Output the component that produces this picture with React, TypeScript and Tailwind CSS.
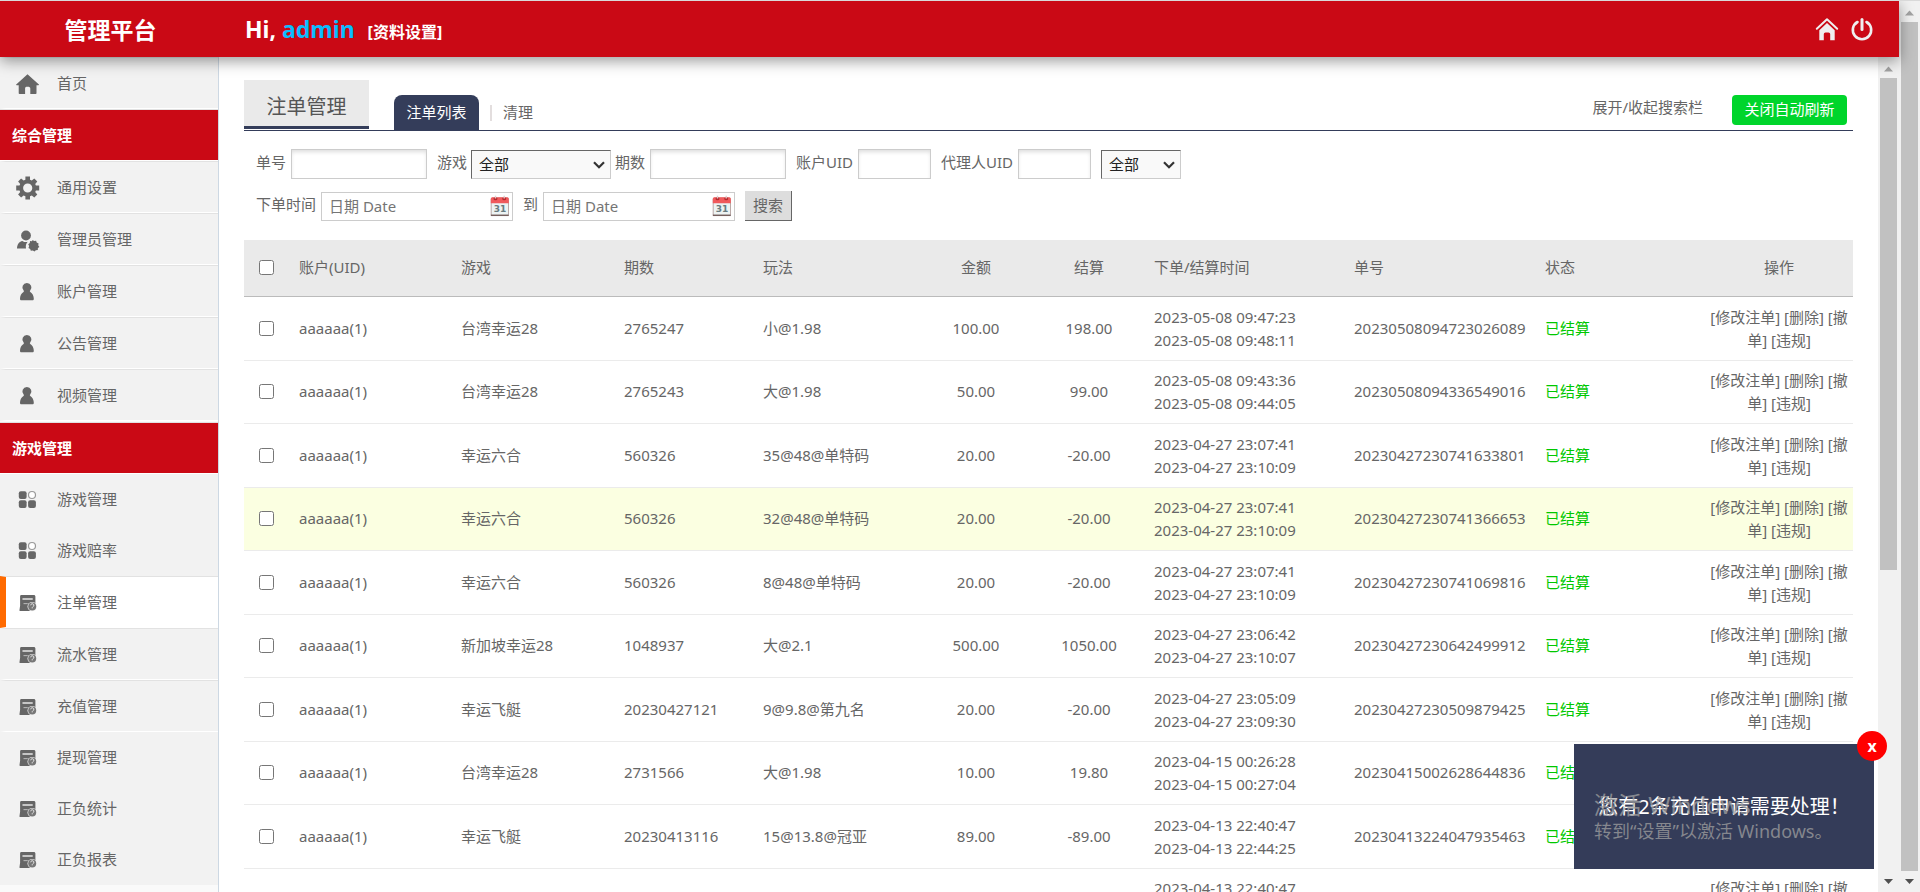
import type { ReactNode } from "react";

type IconName = "home" | "gear" | "admin" | "user" | "grid" | "ledger";

type NavItem = { label: string; icon: IconName; active?: boolean; plain?: boolean };
type NavGroup = { title?: string; items: NavItem[] };

const NAV: NavGroup[] = [
  { items: [{ label: "首页", icon: "home" }] },
  {
    title: "综合管理",
    items: [
      { label: "通用设置", icon: "gear" },
      { label: "管理员管理", icon: "admin" },
      { label: "账户管理", icon: "user" },
      { label: "公告管理", icon: "user" },
      { label: "视频管理", icon: "user" },
    ],
  },
  {
    title: "游戏管理",
    items: [
      { label: "游戏管理", icon: "grid", plain: true },
      { label: "游戏赔率", icon: "grid", plain: true },
      { label: "注单管理", icon: "ledger", active: true },
      { label: "流水管理", icon: "ledger" },
      { label: "充值管理", icon: "ledger" },
      { label: "提现管理", icon: "ledger", plain: true },
      { label: "正负统计", icon: "ledger", plain: true },
      { label: "正负报表", icon: "ledger", plain: true },
    ],
  },
];

type Bet = {
  game: string;
  issue: string;
  play: string;
  amount: string;
  result: string;
  placed: string;
  settled: string;
  order: string;
  highlight?: boolean;
};

const BETS: Bet[] = [
  { game: "台湾幸运28", issue: "2765247", play: "小@1.98", amount: "100.00", result: "198.00", placed: "2023-05-08 09:47:23", settled: "2023-05-08 09:48:11", order: "20230508094723026089" },
  { game: "台湾幸运28", issue: "2765243", play: "大@1.98", amount: "50.00", result: "99.00", placed: "2023-05-08 09:43:36", settled: "2023-05-08 09:44:05", order: "20230508094336549016" },
  { game: "幸运六合", issue: "560326", play: "35@48@单特码", amount: "20.00", result: "-20.00", placed: "2023-04-27 23:07:41", settled: "2023-04-27 23:10:09", order: "20230427230741633801" },
  { game: "幸运六合", issue: "560326", play: "32@48@单特码", amount: "20.00", result: "-20.00", placed: "2023-04-27 23:07:41", settled: "2023-04-27 23:10:09", order: "20230427230741366653", highlight: true },
  { game: "幸运六合", issue: "560326", play: "8@48@单特码", amount: "20.00", result: "-20.00", placed: "2023-04-27 23:07:41", settled: "2023-04-27 23:10:09", order: "20230427230741069816" },
  { game: "新加坡幸运28", issue: "1048937", play: "大@2.1", amount: "500.00", result: "1050.00", placed: "2023-04-27 23:06:42", settled: "2023-04-27 23:10:07", order: "20230427230642499912" },
  { game: "幸运飞艇", issue: "20230427121", play: "9@9.8@第九名", amount: "20.00", result: "-20.00", placed: "2023-04-27 23:05:09", settled: "2023-04-27 23:09:30", order: "20230427230509879425" },
  { game: "台湾幸运28", issue: "2731566", play: "大@1.98", amount: "10.00", result: "19.80", placed: "2023-04-15 00:26:28", settled: "2023-04-15 00:27:04", order: "20230415002628644836" },
  { game: "幸运飞艇", issue: "20230413116", play: "15@13.8@冠亚", amount: "89.00", result: "-89.00", placed: "2023-04-13 22:40:47", settled: "2023-04-13 22:44:25", order: "20230413224047935463" },
  { game: "幸运飞艇", issue: "20230413116", play: "15@13.8@冠亚", amount: "89.00", result: "-89.00", placed: "2023-04-13 22:40:47", settled: "2023-04-13 22:44:25", order: "20230413224047935464" },
];

function NavIcon({ name }: { name: IconName }) {
  return (
    <svg viewBox="0 0 24 24" className="size-6 shrink-0" fill="#666" aria-hidden="true">
      {name === "home" && (
        <path d="M11.500 2.200 22.900 12.400c.4.500.1.900-.5.900H20.500v7.900c0 .5-.3.8-.8.8h-5.400v-5.400c0-1.300-.8-1.900-2.800-1.900s-2.400.6-2.400 1.900V22H3.500c-.5 0-.8-.3-.8-.8v-7.900H.7c-.6 0-.9-.4-.5-.9Z" />
      )}
      {name === "gear" && (
        <path
          fillRule="evenodd"
          d="M9.400.500h4.600v3.200l1.800.800 2.500-2.100 3 3-2.100 2.500.7 1.700h3.300v4.800h-3.300l-.7 1.700 2.100 2.500-3 3-2.500-2.100-1.800.800v3.200H9.400v-3.200l-1.800-.800-2.500 2.100-3-3 2.100-2.500-.7-1.700H.2V9.600h3.300l.7-1.700-2.100-2.500 3-3 2.500 2.100 1.800-.800ZM11.700 7.400a4.600 4.600 0 1 0 0 9.200 4.600 4.600 0 0 0 0-9.200Z"
        />
      )}
      {name === "admin" && (
        <>
          <ellipse cx="10" cy="7.500" rx="4.900" ry="5" />
          <path d="M1 20.500c.2-4.200 1.900-6.900 5.400-7.600 1.200.9 2.400 1.100 3.700 1.100.6 0 1.100 0 1.600-.2-1.700 1.800-2.200 3.900-1.700 6.700Z" />
          <path d="m16.600 11.900 1.500 1.200 2-.4.600 1.900 1.900.8-.4 1.900 1.200 1.600-1.500 1.200-.1 2-2 .2-1.300 1.300-1.700-1.100-2 .3-.6-1.900-1.700-1 .6-1.900-.9-1.700 1.600-1.200.2-2 2 .1Z" />
        </>
      )}
      {name === "user" && (
        <path d="M10.900 3a4.500 4.500 0 0 1 3.300 7.600c-.4.500-.5.900.1 1.300 2.200 1.500 3.500 3.800 3.500 6.900 0 1-.5 1.500-1.500 1.500H5.500c-1 0-1.500-.5-1.500-1.500 0-3.100 1.300-5.400 3.500-6.900.6-.4.500-.8.100-1.300A4.500 4.500 0 0 1 10.900 3Z" />
      )}
      {name === "grid" && (
        <>
          <rect x="2.800" y="3.300" width="7.800" height="7.700" rx="2" />
          <circle cx="16" cy="7" r="3.500" fill="#fff" stroke="#999" strokeWidth="1.200" />
          <rect x="2.800" y="12.300" width="7.800" height="7.700" rx="2" />
          <rect x="12.100" y="12.300" width="7.800" height="7.700" rx="2" />
        </>
      )}
      {name === "ledger" && (
        <>
          <path d="M5.300 3.900h12.400c1.100 0 1.700.6 1.700 1.700V14L14 20H4.300c-.7 0-.9-.4-.8-1.100l.6-4.200V5.600c0-1.100.4-1.700 1.200-1.700Z" />
          <path d="M7 7.900h9.200" stroke="#e6e6e6" strokeWidth="1.500" strokeLinecap="round" />
          <path d="M7.500 12.600h4.200" stroke="#b5b5b5" strokeWidth="1.100" />
          <circle cx="16.200" cy="15.600" r="4.700" fill="#f2f2f2" />
          <circle cx="16.200" cy="15.600" r="4" fill="#777" />
          <path d="M14.700 14.300a1.600 1.600 0 1 1 2.200 1.500c-.500.200-.700.500-.700 1.600" fill="none" stroke="#e0e0e0" strokeWidth="1" />
        </>
      )}
    </svg>
  );
}

function Sidebar() {
  return (
    <nav className="w-[219px] shrink-0 overflow-hidden border-r border-[#cdd8e3] bg-[#fafafa]">
      {NAV.map((group, i) => (
        <div key={i} className={group.title ? "pb-px" : ""}>
          {group.title && (
            <h2 className="flex h-[52px] items-center border-y border-t-[#e2e2e2] border-b-white bg-[#ca0915] pl-3 text-[15px] font-bold text-white">
              {group.title}
            </h2>
          )}
          <ul>
            {group.items.map((item) => (
              <li key={item.label}>
                <a
                  href="#"
                  className={
                    "flex items-center gap-[17px] border-l-[6px] pl-[10px] " +
                    (item.plain
                      ? "h-[51px] border-y border-t-[#f2f2f2] border-b-[#f2f2f2] pt-px "
                      : "h-[52px] border-y border-t-[#e2e2e2] border-b-white pt-[2px] ") +
                    (item.active ? "border-l-[#ff6a00] bg-white" : "border-l-[#f2f2f2] bg-[#f2f2f2]")
                  }
                >
                  <NavIcon name={item.icon} />
                  <span className="pb-px">{item.label}</span>
                </a>
              </li>
            ))}
          </ul>
        </div>
      ))}
    </nav>
  );
}

function ScrollBar({ children }: { children: ReactNode }) {
  return (
    <div className="flex w-[21px] shrink-0 flex-col items-center bg-[#f1f1f1]" aria-hidden="true">
      <svg viewBox="0 0 21 21" className="size-[21px] shrink-0">
        <path d="M6 14.500 10.500 9.500 15 14.500Z" fill="#a3a3a3" />
      </svg>
      <div className="flex min-h-0 w-[17px] flex-1 flex-col">{children}</div>
      <svg viewBox="0 0 21 21" className="size-[21px] shrink-0">
        <path d="M6 8 10.500 13 15 8Z" fill="#505050" />
      </svg>
    </div>
  );
}

function Field({ id, label, width }: { id: string; label: string; width: string }) {
  return (
    <div className="flex items-center gap-[5px]">
      <label htmlFor={id} className="pb-[3px]">
        {label}
      </label>
      <input
        id={id}
        type="text"
        className={"h-[30px] border border-[#ccc] bg-white px-2 shadow-[inset_0_3px_4px_-1px_#ddd] " + width}
      />
    </div>
  );
}

function Picker({ id, label, width }: { id: string; label: string; width: string }) {
  return (
    <div className={"relative mt-px " + width}>
      <select
        id={id}
        aria-label={label}
        className="h-[29px] w-full appearance-none border border-t-[#666] border-r-[#ccc] border-b-[#ccc] border-l-[#666] bg-[#f9f9f9] pl-[7px] text-[#222]"
      >
        <option>全部</option>
      </select>
      <svg viewBox="0 0 12 8" className="pointer-events-none absolute top-[11px] right-[6px] h-2 w-3">
        <path d="m1 1.200 5 5 5-5" fill="none" stroke="#333" strokeWidth="2.200" />
      </svg>
    </div>
  );
}

function CalendarIcon() {
  return (
    <svg viewBox="0 0 20 22" className="pointer-events-none absolute top-[3px] right-[3px] h-[22px] w-5" aria-hidden="true">
      <rect x="1.200" y="3" width="17.300" height="17.500" rx="1.200" fill="#edf3f3" stroke="#b9a9a7" strokeWidth="1" />
      <path d="M.8 8.200V3.800q0-1.600 1.600-1.600h14.800q1.600 0 1.600 1.600v4.400Z" fill="#f05a5c" />
      <path d="M.8 20.300h18" stroke="#75605e" strokeWidth="1.500" />
      <ellipse cx="5.500" cy="3.800" rx="2" ry="1.500" fill="#b5282d" />
      <ellipse cx="14.200" cy="3.800" rx="2" ry="1.500" fill="#b5282d" />
      <path d="M5.500.8v2.800M14.200.8v2.800" stroke="#e0cccc" strokeWidth="1.400" />
      <text x="9.900" y="17" textAnchor="middle" fontSize="9" fontWeight="700" fontFamily="DejaVu Sans" fill="#687c80">
        31
      </text>
    </svg>
  );
}

function DateField({ id, label }: { id: string; label: string }) {
  return (
    <div className="flex items-center gap-[5px]">
      <label htmlFor={id} className="pb-[3px]">
        {label}
      </label>
      <div className="relative w-48">
        <input
          id={id}
          type="text"
          placeholder="日期 Date"
          className="h-[29px] w-full border border-[#ccc] bg-white pr-7 pl-[7px] placeholder:text-[#757575]"
        />
        <CalendarIcon />
      </div>
    </div>
  );
}

function BetTable() {
  return (
    <table className="w-full table-fixed border-collapse text-left">
      <colgroup>
        <col className="w-[45px]" />
        <col className="w-[162px]" />
        <col className="w-[163px]" />
        <col className="w-[139px]" />
        <col className="w-[165px]" />
        <col className="w-[116px]" />
        <col className="w-[110px]" />
        <col className="w-[200px]" />
        <col className="w-[191px]" />
        <col className="w-[170px]" />
        <col className="w-[148px]" />
      </colgroup>
      <thead>
        <tr className="h-14 border-b border-[#bbb] bg-[#eaeaea] [&>th]:font-normal">
          <th>
            <input type="checkbox" aria-label="全选" className="mx-auto block size-[15px]" />
          </th>
          <th className="px-[10px]">账户(UID)</th>
          <th className="px-[10px]">游戏</th>
          <th className="px-[10px]">期数</th>
          <th className="px-[10px]">玩法</th>
          <th className="text-center">金额</th>
          <th className="text-center">结算</th>
          <th className="px-[10px]">下单/结算时间</th>
          <th className="px-[10px]">单号</th>
          <th className="px-[10px]">状态</th>
          <th className="text-center">操作</th>
        </tr>
      </thead>
      <tbody>
        {BETS.map((bet) => (
          <tr
            key={bet.order}
            className={"border-b border-[#ebebeb] odd:h-16 even:h-[63px] " + (bet.highlight ? "bg-[#fbffe1]" : "bg-white")}
          >
            <td>
              <input type="checkbox" aria-label={"选择 " + bet.order} className="mx-auto block size-[15px]" />
            </td>
            <td className="px-[10px]">aaaaaa(1)</td>
            <td className="px-[10px]">{bet.game}</td>
            <td className="px-[10px]">{bet.issue}</td>
            <td className="px-[10px]">{bet.play}</td>
            <td className="text-center">{bet.amount}</td>
            <td className="text-center">{bet.result}</td>
            <td className="px-[10px] pt-px">
              {bet.placed}
              <br />
              {bet.settled}
            </td>
            <td className="px-[10px]">{bet.order}</td>
            <td className="px-[10px] text-[#00c800]">已结算</td>
            <td className="pt-px text-center">
              <a href="#">[修改注单]</a> <a href="#">[删除]</a> <a href="#">[撤单]</a> <a href="#">[违规]</a>
            </td>
          </tr>
        ))}
      </tbody>
    </table>
  );
}

export default function App() {
  return (
    <div className="flex h-screen overflow-hidden border-t border-[#d9d9d9] bg-white font-['Noto_Sans','Noto_Sans_CJK_SC',sans-serif] text-[15px] leading-[23px] text-[#666]">
      <div className="relative flex min-w-0 flex-1 flex-col">
        <header className="relative z-10 flex h-14 shrink-0 items-center bg-[#ca0915] pr-[25px] text-white shadow-[0_4px_14px_rgba(0,0,0,0.4)]">
          <h1 className="w-[221px] shrink-0 pt-[2px] text-center text-[23px] font-bold">管理平台</h1>
          <p className="flex flex-1 items-baseline gap-[13px] pt-1 pl-6 font-bold">
            <span className="text-[23px]">
              Hi, <span className="text-[#0bbcff]">admin</span>
            </span>
            <a href="#" className="text-[16px]">
              [资料设置]
            </a>
          </p>
          <div className="flex gap-[11px] pb-px">
            <a href="#" aria-label="首页">
              <svg viewBox="0 0 24 24" className="size-6">
                <path d="m1.800 11.800 10.200-9.500 10.200 9.500" fill="none" stroke="#efefef" strokeWidth="2" strokeLinecap="round" strokeLinejoin="round" />
                <path d="M12 6 19.700 13.200V23.300H15.200v-6.200q0-1.700-1.700-1.700h-3q-1.700 0-1.700 1.700v6.200H4.300V13.200Z" fill="#efefef" />
              </svg>
            </a>
            <a href="#" aria-label="退出">
              <svg viewBox="0 0 24 24" className="size-6" fill="none" stroke="#efefef" strokeLinecap="round">
                <path d="M7.500 5a9.200 9.200 0 1 0 9 0" strokeWidth="2.600" />
                <path d="M12 2.400v10" strokeWidth="3" />
              </svg>
            </a>
          </div>
        </header>

        <div className="flex min-h-0 flex-1">
          <Sidebar />
          <main className="min-w-0 flex-1 overflow-hidden px-[25px] pt-[23px]">
            <div className="flex items-end border-b border-[#343d5a]">
              <h2 className="mb-px flex h-[49px] w-[125px] items-center justify-center border-b-[3px] border-[#343d5a] bg-[#eaeaea] pt-[6px] text-[20px] text-[#555]">
                注单管理
              </h2>
              <div className="ml-[25px] flex items-center">
                <a href="#" className="flex h-[35px] w-[85px] items-center justify-center rounded-t-lg bg-[#343d5a] text-white">
                  注单列表
                </a>
                <span className="mx-[11px] h-4 w-[2px] bg-[#e3dede]" />
                <a href="#">清理</a>
              </div>
              <div className="mr-[6px] mb-[5px] ml-auto flex items-center gap-[29px]">
                <a href="#" className="pb-[5px]">
                  展开/收起搜索栏
                </a>
                <button type="button" className="h-[30px] w-[115px] rounded bg-[#00d52b] pb-[2px] text-white">
                  关闭自动刷新
                </button>
              </div>
            </div>

            <form className="flex flex-col gap-3 px-3 pt-[18px] pb-[19px]">
              <div className="flex items-center gap-[10px]">
                <Field id="order" label="单号" width="w-[136px]" />
                <div className="flex items-center gap-1">
                  <label htmlFor="game" className="pb-[3px]">
                    游戏
                  </label>
                  <Picker id="game" label="游戏" width="w-[140px]" />
                  <Field id="issue" label="期数" width="w-[136px]" />
                </div>
                <Field id="uid" label="账户UID" width="w-[73px]" />
                <Field id="agent" label="代理人UID" width="w-[73px]" />
                <Picker id="state" label="状态" width="w-[80px]" />
              </div>
              <div className="flex items-center gap-[10px]">
                <DateField id="from" label="下单时间" />
                <DateField id="to" label="到" />
                <button type="button" className="h-[30px] border-r border-b border-[#666] bg-[#ddd] px-2">
                  搜索
                </button>
              </div>
            </form>

            <BetTable />
          </main>
          <ScrollBar>
            <div className="basis-[62%] bg-[#c1c1c1]" />
          </ScrollBar>
        </div>

        <aside className="absolute right-[25px] bottom-[23px] z-20 flex h-[125px] w-[300px] items-center justify-center bg-[#343c59]">
          <p className="text-[20px] text-white">您有2条充值申请需要处理！</p>
          <div className="pointer-events-none absolute top-[47px] left-5 whitespace-nowrap text-[#a0a0a0]/75">
            <p className="text-[24px] leading-[28px]">激活 Windows</p>
            <p className="text-[18px] leading-[25px]">转到“设置”以激活 Windows。</p>
          </div>
          <button
            type="button"
            aria-label="关闭"
            className="absolute -top-[13px] -right-[13px] size-[30px] rounded-full bg-[#ff0000] text-[16px] font-bold text-white"
          >
            x
          </button>
        </aside>
      </div>
      <ScrollBar>
        <div className="flex-1 bg-[#c1c1c1]" />
      </ScrollBar>
    </div>
  );
}
